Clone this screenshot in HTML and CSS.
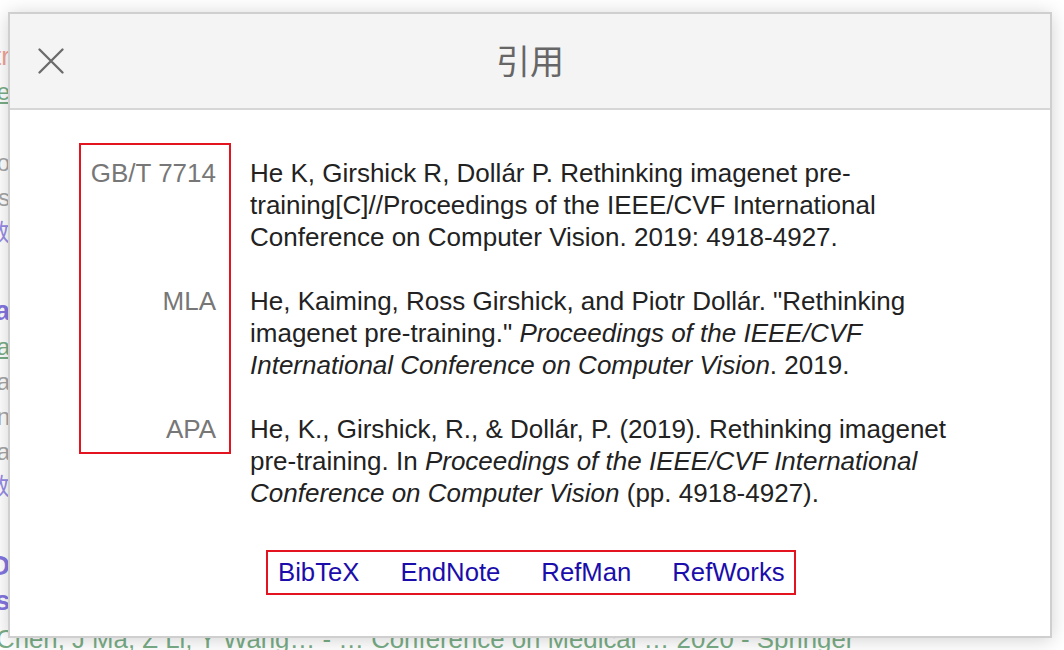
FILE: index.html
```html
<!DOCTYPE html>
<html lang="zh">
<head>
<meta charset="utf-8">
<title>引用</title>
<link rel="stylesheet" href="styles.css">
</head>
<body>
<div class="page">
  <div class="grp grp-a">
    <div class="ln"><span class="c-red">Rethinking ImageNet Pre-tr</span></div>
    <div class="ln"><span class="c-green u">K He, R Girshick, P Dollár - Proceedings of the IEEE/CVF Inte</span></div>
  </div>
  <div class="grp grp-b">
    <div class="ln"><span class="c-gray">We report competitive results on object detection and instance segmentation on the COCO dataset using standard models trained from rando</span></div>
    <div class="ln"><span class="c-gray">initialization. The results are no worse than their ImageNet pre-training counterparts</span></div>
    <div class="ln"><span class="c-purple">☆ 保存 ❞ 引用 被引用次数</span></div>
  </div>
  <div class="grp grp-c">
    <div class="ln"><span class="c-title">Benchmarking detection transfer lea</span></div>
    <div class="ln"><span class="c-green u">Y Li, S Xie, X Chen, P Dollar, K He, R Girshick - arXiv preprint arXiv:2111.11429, 2021 - arxiv.org › abs › ImageNet-pretraining fa</span></div>
    <div class="ln"><span class="c-gray">Object detection is a central downstream task used to test if pre-trained network parameters confer benefits, such as improved accuracy or training speed. The complexity of object detection methods ca</span></div>
    <div class="ln"><span class="c-gray">make this benchmarking non-trivial when new architectures, such as Vision Transformer (ViT) models, arrive. These difficulties (e.g., architectural incompatibility, slow training, high memory consumption, unkn</span></div>
    <div class="ln"><span class="c-gray">training formulae, etc.) have prevented recent studies from benchmarking detection transfer learning with standard ViT models. In this pa</span></div>
    <div class="ln"><span class="c-purple">☆ 保存 ❞ 引用 被引用次数</span></div>
  </div>
  <div class="grp grp-d">
    <div class="ln"><span class="c-title">Rethinking ImageNet pre-training for computer-aided diagnosis of medical images: self-supervised rO</span></div>
    <div class="ln"><span class="c-title">representation learning with multi-views</span></div>
    <div class="ln full"><span class="c-green">Chen, J Ma, Z Li, Y Wang… - … Conference on Medical … 2020 - Springer</span></div>
  </div>
</div>

<div class="dialog" role="dialog" aria-labelledby="dlg-title">
  <div class="dlg-head">
    <button class="close" aria-label="关闭">
      <svg width="26" height="26" viewBox="0 0 26 26" aria-hidden="true">
        <path d="M1.5 1.5 L24.5 24.5 M24.5 1.5 L1.5 24.5" stroke="#6b6b6b" stroke-width="2.3" stroke-linecap="round" fill="none"/>
      </svg>
    </button>
    <h1 id="dlg-title" class="dlg-title">引用</h1>
    <span class="head-spacer"></span>
  </div>
  <div class="dlg-body">
    <div class="cites">
      <div class="lbl r1">GB/T 7714</div>
      <div class="txt r1">He K, Girshick R, Dollár P. Rethinking imagenet pre-training[C]//Proceedings of the IEEE/CVF International Conference on Computer Vision. 2019: 4918-4927.</div>
      <div class="lbl r2">MLA</div>
      <div class="txt r2">He, Kaiming, Ross Girshick, and Piotr Dollár. "Rethinking imagenet pre-training." <i>Proceedings of the IEEE/CVF International Conference on Computer Vision</i>. 2019.</div>
      <div class="lbl r3">APA</div>
      <div class="txt r3">He, K., Girshick, R., &amp; Dollár, P. (2019). Rethinking imagenet pre-training. In <i>Proceedings of the IEEE/CVF International Conference on Computer Vision</i> (pp. 4918-4927).</div>
      <div class="lblbox" aria-hidden="true"></div>
    </div>
    <div class="links">
      <a href="#">BibTeX</a>
      <a href="#">EndNote</a>
      <a href="#">RefMan</a>
      <a href="#">RefWorks</a>
    </div>
  </div>
</div>
</body>
</html>
```

FILE: styles.css
```css
* { box-sizing: border-box; }

html, body {
  margin: 0;
  padding: 0;
  background: #ffffff;
  width: 1064px;
  height: 650px;
  overflow: hidden;
  font-family: "Liberation Sans", Arial, "Noto Sans CJK SC", sans-serif;
}

/* Background page (mostly covered by the dialog) */
.page {
  padding-top: 39px;
  display: flex;
  flex-direction: column;
}
.grp { display: flex; flex-direction: column; }
.grp-b { margin-top: 36px; }
.grp-c { margin-top: 44px; }
.grp-d { margin-top: 45px; }

.ln {
  width: 10px;
  height: 35px;
  line-height: 35px;
  font-size: 24px;
  white-space: nowrap;
  overflow: hidden;
  display: flex;
  justify-content: flex-end;
}
.ln.full {
  width: 1064px;
  justify-content: flex-start;
  margin-top: 3px;
  margin-left: -4px;
  font-size: 25.8px;
  overflow: visible;
}
.c-red { color: #f0a397; font-size: 26px; }
.c-green { color: #79ad86; }
.c-gray { color: #a6a6a6; }
.c-purple { color: #978be6; }
.c-title { color: #8476e0; font-weight: bold; font-size: 27px; }
.u { text-decoration: underline; }

/* Dialog overlay */
.dialog {
  position: absolute;
  left: 8px;
  top: 12px;
  width: 1044px;
  height: 626px;
  background: #ffffff;
  border: 2px solid #cfcfcf;
  box-shadow: 0 2px 18px rgba(0, 0, 0, 0.18);
  display: flex;
  flex-direction: column;
}

.dlg-head {
  height: 96px;
  background: #f4f4f4;
  border-bottom: 2px solid #d6d6d6;
  display: grid;
  grid-template-columns: 1fr auto 1fr;
  align-items: center;
}
.close {
  justify-self: start;
  margin-left: 28px;
  padding: 0;
  border: 0;
  background: transparent;
  width: 26px;
  height: 26px;
  display: block;
  cursor: pointer;
}
.close svg { display: block; }
.dlg-title {
  margin: 0 0 3px 0;
  font-family: "Noto Sans CJK SC", "Liberation Sans", sans-serif;
  font-weight: normal;
  font-size: 34px;
  line-height: 40px;
  color: #666666;
}

.dlg-body {
  padding: 47px 0 0 69px;
  display: flex;
  flex-direction: column;
}

.cites {
  display: grid;
  grid-template-columns: 152px 712px;
  column-gap: 19px;
  font-size: 26px;
  line-height: 32px;
}
.lbl {
  grid-column: 1;
  text-align: right;
  padding-right: 15px;
  color: #777777;
}
.txt {
  grid-column: 2;
  color: #222222;
  padding-bottom: 32px;
}
.txt i { font-style: italic; }
.r1 { grid-row: 1; }
.r2 { grid-row: 2; }
.r3 { grid-row: 3; }
.lblbox {
  grid-column: 1;
  grid-row: 1 / 4;
  border: 2px solid #e3141f;
  margin-top: -14px;
  margin-bottom: 87px;
  pointer-events: none;
}

.links {
  align-self: flex-start;
  margin-left: 187px;
  margin-top: 9px;
  border: 2px solid #e3141f;
  padding: 4px 9px 5px 10px;
  display: flex;
  gap: 41px;
  font-size: 25.7px;
  line-height: 32px;
}
.links a {
  color: #1a0dab;
  text-decoration: none;
}
```
